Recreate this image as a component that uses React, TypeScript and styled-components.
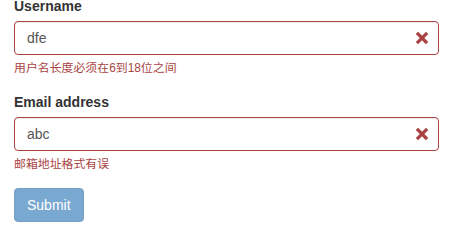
import React from 'react';
import styled, { createGlobalStyle } from 'styled-components';

const GlobalStyle = createGlobalStyle`
  html, body {
    margin: 0;
    padding: 0;
    background: #fff;
  }
  body {
    font-family: "Liberation Sans", Arial, "Noto Sans CJK SC", sans-serif;
    font-size: 14px;
    line-height: 1.42857143;
    color: #333;
  }
  * {
    box-sizing: border-box;
  }
`;

const Form = styled.form`
  margin-top: -4px;
  padding: 0 24px 0 14px;
`;

const FormGroup = styled.div`
  margin-bottom: 15px;
`;

const Label = styled.label`
  display: inline-block;
  max-width: 100%;
  margin-bottom: 5px;
  font-weight: bold;
  color: #333;
`;

const InputWrap = styled.div`
  position: relative;
`;

const Input = styled.input<{ $error?: boolean }>`
  display: block;
  width: 100%;
  height: 34px;
  padding: 6px 42px 6px 12px;
  font-family: inherit;
  font-size: 14px;
  line-height: 1.42857143;
  color: #555;
  background: #fff;
  border: 1px solid ${p => (p.$error ? '#a94442' : '#ccc')};
  border-radius: 4px;
  box-shadow: inset 0 1px 1px rgba(0, 0, 0, 0.075);
  outline: none;
`;

const Feedback = styled.span`
  position: absolute;
  top: 0;
  right: 0;
  width: 34px;
  height: 34px;
  display: flex;
  align-items: center;
  justify-content: center;
  pointer-events: none;
`;

const HelpBlock = styled.small`
  display: block;
  margin-top: 5px;
  margin-bottom: 10px;
  font-size: 85%;
  color: #a94442;
  font-family: "Liberation Sans", Arial, "Noto Sans CJK SC", sans-serif;
`;

const SubmitButton = styled.button`
  display: inline-block;
  padding: 6px 12px;
  font-family: inherit;
  font-size: 14px;
  line-height: 1.42857143;
  color: #fff;
  background-color: #337ab7;
  border: 1px solid #2e6da4;
  border-radius: 4px;
  opacity: 0.65;
  cursor: not-allowed;
`;

const RemoveIcon = () => (
  <svg width="12" height="12" viewBox="0 0 12 12">
    <path
      d="M2 2 L10 10 M10 2 L2 10"
      stroke="#a94442"
      strokeWidth="3.2"
      strokeLinecap="square"
      fill="none"
    />
  </svg>
);

interface FieldProps {
  label: string;
  value: string;
  error: string;
}

const Field: React.FC<FieldProps> = ({ label, value, error }) => (
  <FormGroup>
    <Label>{label}</Label>
    <InputWrap>
      <Input $error type="text" defaultValue={value} />
      <Feedback>
        <RemoveIcon />
      </Feedback>
    </InputWrap>
    <HelpBlock>{error}</HelpBlock>
  </FormGroup>
);

const App: React.FC = () => (
  <>
    <GlobalStyle />
    <Form onSubmit={e => e.preventDefault()}>
      <Field label="Username" value="dfe" error="用户名长度必须在6到18位之间" />
      <Field label="Email address" value="abc" error="邮箱地址格式有误" />
      <SubmitButton type="submit" disabled>
        Submit
      </SubmitButton>
    </Form>
  </>
);

export default App;
